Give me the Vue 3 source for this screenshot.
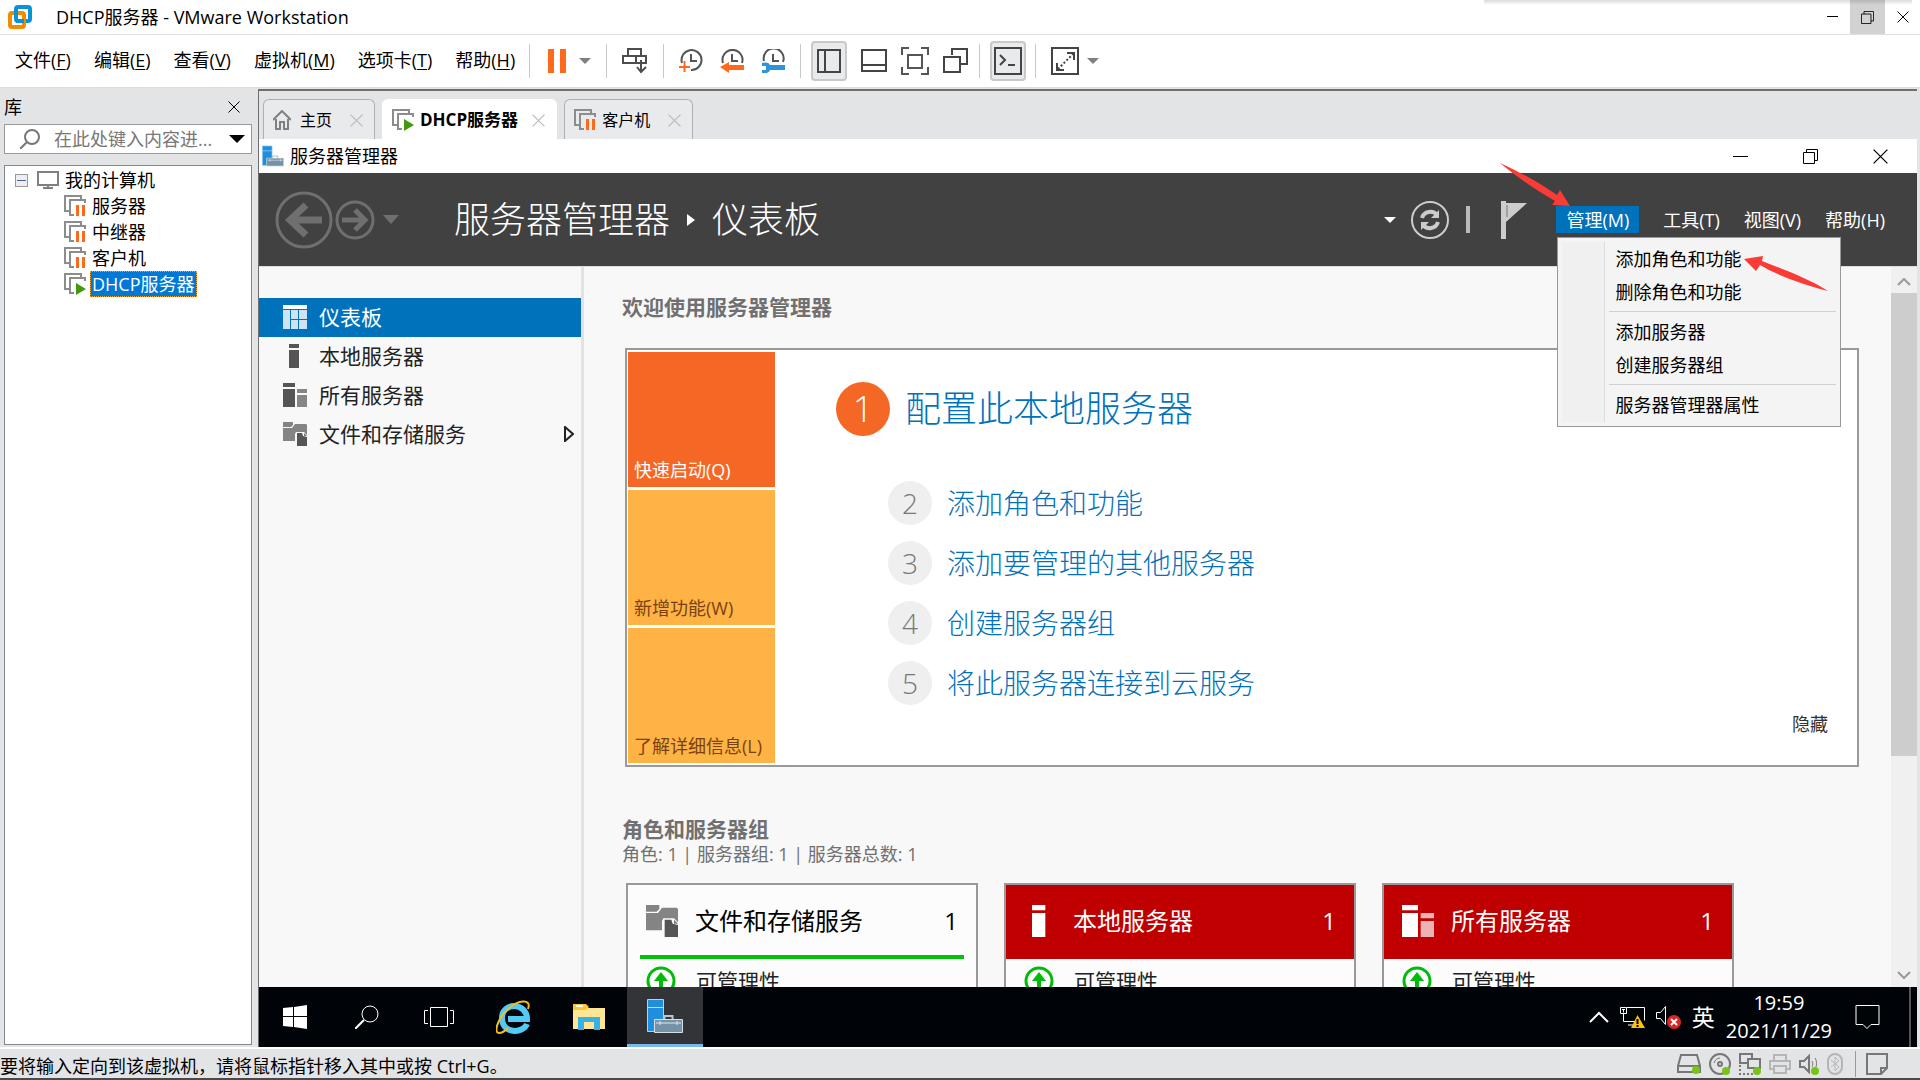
<template>
  <div class="workstation">
    <svg class="symbols" aria-hidden="true">
      <symbol id="vm-paused" viewBox="0 0 22 22">
        <path d="M5 16H1V1h16v4" fill="none" stroke="#8c8c8c" stroke-width="2" />
        <path d="M10 20H6V5h15v3" fill="none" stroke="#8c8c8c" stroke-width="2" />
        <path d="M12 10h3v11h-3zM18 10h3v11h-3z" fill="#ff6a1a" />
      </symbol>
      <symbol id="vm-running" viewBox="0 0 22 22">
        <path d="M5 16H1V1h16v4" fill="none" stroke="#8c8c8c" stroke-width="2" />
        <path d="M10 20H6V5h15v3" fill="none" stroke="#8c8c8c" stroke-width="2" />
        <path d="M12 10v12l10-6z" fill="#43980e" />
      </symbol>
      <symbol id="cross" viewBox="0 0 12 12">
        <path d="M0.5 0.5l11 11M11.5 0.5l-11 11" fill="none" stroke="currentColor" />
      </symbol>
      <symbol id="restore" viewBox="0 0 15 15">
        <path d="M3.5 3.5v-3h11v11h-3M0.5 3.5h11v11h-11z" fill="none" stroke="#000" />
      </symbol>
      <symbol id="toolbox" viewBox="0 0 36 34">
        <path d="M0.5 0.5h16v32h-16z" fill="#1f8fdd" stroke="#a9d6f5" />
        <path d="M0 8.5h17" stroke="#b9dff8" />
        <path d="M17.5 21v-4h8v4" fill="none" stroke="#b5c6d1" stroke-width="2" />
        <path d="M7.5 20.5h28v13h-28z" fill="#7593a6" stroke="#d5dfe5" />
        <path d="M9 24h25M13 22v4M30 22v4" stroke="#dfe7ec" />
      </symbol>
      <symbol id="local-server" viewBox="0 0 24 24">
        <path d="M6 0h10v4H6zM6 6h10v18H6z" fill="currentColor" />
      </symbol>
      <symbol id="all-servers" viewBox="0 0 24 24">
        <path d="M0 0h12v4H0zM0 6h12v18H0z" fill="currentColor" />
        <path d="M14 6h10v4H14zM14 12h10v12H14z" fill="currentColor" opacity="0.7" />
      </symbol>
      <symbol id="storage" viewBox="0 0 24 24">
        <path d="M0 5V0h10v3l-2 2z" fill="#848484" />
        <path d="M0 6h9l3-4h11l1 1v10l-3-3h-8l-1 2v7H0z" fill="#848484" />
        <path d="M14 11h5l1 3 4 1v9H14z" fill="#555" />
        <path d="M21 11l3 3h-3z" fill="#777" />
      </symbol>
      <symbol id="dashboard" viewBox="0 0 24 24">
        <path d="M0 0h24v4H0z" fill="#fff" />
        <path d="M0 5h7v19H0zM8 5h7v9H8zM16 5h8v9h-8zM8 15h7v9H8zM16 15h8v9h-8z" fill="#cce4f3" />
      </symbol>
    </svg>

    <header class="titlebar">
      <svg class="app-logo" viewBox="0 0 24 24">
        <rect x="8" y="2" width="14" height="14" rx="2" fill="none" stroke="#0a94d6" stroke-width="4" />
        <rect x="2" y="8" width="14" height="14" rx="2" fill="none" stroke="#f38b00" stroke-width="4" />
        <path d="M8 12V4M8 16h8" fill="none" stroke="#0a94d6" stroke-width="4" />
      </svg>
      <h1>DHCP服务器 - VMware Workstation</h1>
      <div class="window-buttons">
        <button type="button" aria-label="最小化"><svg width="11" height="12" viewBox="0 0 11 12"><path d="M0 5.5h11" stroke="#000" /></svg></button>
        <button type="button" class="hovered" aria-label="还原"><svg width="13" height="13"><use href="#restore" /></svg></button>
        <button type="button" aria-label="关闭"><svg width="12" height="12"><use href="#cross" /></svg></button>
      </div>
      <div class="edge-shadow"></div>
    </header>

    <div class="toolbar">
      <nav class="menus">
        <button v-for="menu in menus" :key="menu.key" type="button">{{ menu.label }}(<u>{{ menu.key }}</u>)</button>
      </nav>
      <div class="tool-group">
        <button type="button" class="tool pause" aria-label="挂起">
          <svg width="20" height="24" viewBox="0 0 20 24"><path d="M1 0h6v24H1zM13 0h6v24h-6z" fill="#ff6a1a" /></svg>
          <span class="caret"></span>
        </button>
      </div>
      <div class="tool-group">
        <button type="button" class="tool" aria-label="发送 Ctrl+Alt+Del">
          <svg width="26" height="26" viewBox="0 0 26 26" fill="none" stroke="#4d4d4d" stroke-width="2">
            <path d="M6 1h13v7H6zM1 8h13v7H1zM14 8h10v7H14zM19 12v12M15 19l4 5 5-5" />
          </svg>
        </button>
      </div>
      <div class="tool-group wide">
        <button type="button" class="tool" aria-label="拍摄快照">
          <svg width="24" height="24" viewBox="0 0 24 24" fill="none" stroke="#555" stroke-width="2">
            <path d="M3 14a10 10 0 1 1 9 7M12 5v7h6" />
            <path d="M0 18h11M5.5 12v11" stroke="#ff6a1a" />
          </svg>
        </button>
        <button type="button" class="tool" aria-label="恢复快照">
          <svg width="24" height="24" viewBox="0 0 24 24" fill="none" stroke="#555" stroke-width="2">
            <path d="M3 14a10 10 0 1 1 19 0M12 5v7h6" />
            <path d="M0 18l9-5v3h15v5H9v3z" fill="#ff6a1a" stroke="none" />
          </svg>
        </button>
        <button type="button" class="tool" aria-label="管理快照">
          <svg width="24" height="24" viewBox="0 0 24 24" fill="none" stroke="#555" stroke-width="2">
            <path d="M3 12a10 10 0 1 1 19 1M12 5v7h6" />
            <path d="M1 14c3-1 7-1 8 2h15v5H9c-1 3-5 4-8 3v-3h4v-4H1z" fill="#2c96dd" stroke="none" />
          </svg>
        </button>
      </div>
      <div class="tool-group views">
        <button type="button" class="tool pressed" aria-label="显示库">
          <svg width="24" height="24" viewBox="0 0 24 24" fill="none" stroke="#444" stroke-width="2"><path d="M1 1h22v22H1zM8 1v22" /></svg>
        </button>
        <button type="button" class="tool" aria-label="显示缩略图栏">
          <svg width="26" height="24" viewBox="0 0 26 24" fill="none" stroke="#444" stroke-width="2"><path d="M1 1h24v21H1zM1 16h24" /></svg>
        </button>
        <button type="button" class="tool" aria-label="全屏">
          <svg width="28" height="28" viewBox="0 0 28 28" fill="none" stroke="#555" stroke-width="2"><path d="M1 8V1h7M20 1h7v7M27 20v7h-7M8 27H1v-7M7 8h14v13H7z" /></svg>
        </button>
        <button type="button" class="tool" aria-label="Unity">
          <svg width="26" height="26" viewBox="0 0 26 26" fill="none" stroke="#444" stroke-width="2"><path d="M9 7V1h15v15h-6M1 9h16v15H1z" /></svg>
        </button>
      </div>
      <div class="tool-group console">
        <button type="button" class="tool pressed" aria-label="控制台视图">
          <svg width="28" height="28" viewBox="0 0 28 28" fill="none" stroke="#444" stroke-width="2"><path d="M1 1h26v26H1z" /><path d="M6 8l5 5-5 5M14 18h7" /></svg>
        </button>
      </div>
      <div class="tool-group stretch">
        <button type="button" class="tool" aria-label="自由拉伸">
          <svg width="28" height="28" viewBox="0 0 28 28" fill="none" stroke="#444" stroke-width="2"><path d="M1 1h26v26H1zM16 6h7v7M6 16v7h7" /><path d="M7 22L22 7" stroke-dasharray="2 2" /></svg>
          <span class="caret"></span>
        </button>
      </div>
    </div>

    <div class="workspace">
      <aside class="library">
        <div class="library-head">
          <h2>库</h2>
          <button type="button" aria-label="关闭库"><svg width="12" height="12"><use href="#cross" /></svg></button>
        </div>
        <label class="library-search">
          <svg width="20" height="20" viewBox="0 0 20 20" fill="none" stroke="#777" stroke-width="2"><circle cx="12" cy="8" r="7" /><path d="M7 13l-7 7" /></svg>
          <input v-model="searchQuery" type="text" placeholder="在此处键入内容进..." aria-label="搜索库" />
          <span class="caret black"></span>
        </label>
        <div class="tree">
          <div class="tree-root">
            <span class="toggle"></span>
            <svg width="22" height="18" viewBox="0 0 22 18" fill="none" stroke="#808080" stroke-width="2"><path d="M1 1h20v13H1zM11 14v3M6 17h10" /></svg>
            <span>我的计算机</span>
          </div>
          <ul>
            <li v-for="vm in machines" :key="vm.name">
              <svg width="22" height="22"><use :href="'#vm-' + vm.state" /></svg>
              <span class="vm-name" :class="{ selected: vm.selected }">{{ vm.name }}</span>
            </li>
          </ul>
        </div>
      </aside>

      <section class="console-pane">
        <div class="tabs">
          <div class="tab home">
            <svg width="18" height="20" viewBox="0 0 18 20" fill="none" stroke="#808080" stroke-width="2"><path d="M0 10l9-9 9 9M3 9v10h4v-7h4v7h4V9" /></svg>
            <button type="button">主页</button>
            <svg class="tab-close" width="13" height="13"><use href="#cross" /></svg>
          </div>
          <div class="tab active">
            <svg width="22" height="22"><use href="#vm-running" /></svg>
            <button type="button">DHCP服务器</button>
            <svg class="tab-close" width="13" height="13"><use href="#cross" /></svg>
          </div>
          <div class="tab">
            <svg width="22" height="22"><use href="#vm-paused" /></svg>
            <button type="button">客户机</button>
            <svg class="tab-close" width="13" height="13"><use href="#cross" /></svg>
          </div>
        </div>

        <div class="guest">
          <div class="guest-title">
            <svg width="22" height="22"><use href="#toolbox" /></svg>
            <span>服务器管理器</span>
            <div class="guest-buttons">
              <button type="button" aria-label="最小化"><svg width="15" height="15" viewBox="0 0 15 15"><path d="M0 7.5h15" stroke="#000" /></svg></button>
              <button type="button" aria-label="还原"><svg width="15" height="15"><use href="#restore" /></svg></button>
              <button type="button" aria-label="关闭"><svg width="15" height="15"><use href="#cross" /></svg></button>
            </div>
          </div>

          <div class="manager-head">
            <button type="button" class="round" aria-label="后退">
              <svg width="58" height="58" viewBox="0 0 58 58" fill="none" stroke="#6f6f6f"><circle cx="29" cy="29" r="27" stroke-width="3" /><path d="M47 29H16M31 14L15 29l16 15" stroke-width="7" /></svg>
            </button>
            <button type="button" class="round" aria-label="前进">
              <svg width="40" height="40" viewBox="0 0 40 40" fill="none" stroke="#6f6f6f"><circle cx="20" cy="20" r="18" stroke-width="3" /><path d="M7 20h23M20 10l10 10-10 10" stroke-width="5" /></svg>
            </button>
            <span class="caret dim"></span>
            <div class="crumbs">
              <span>服务器管理器</span>
              <span class="crumb-arrow"></span>
              <span>仪表板</span>
            </div>
            <div class="manager-tools">
              <span class="caret white"></span>
              <button type="button" class="round refresh" aria-label="刷新">
                <svg width="40" height="40" viewBox="0 0 40 40" fill="none" stroke="#ccc">
                  <circle cx="20" cy="20" r="18" stroke-width="2" />
                  <path d="M12 18c2-7 11-8 15-3M28 22c-2 7-11 8-15 3" stroke-width="4" />
                  <path d="M29 10v8h-8zM11 30v-8h8z" fill="#ccc" stroke="none" />
                </svg>
              </button>
              <span class="divider"></span>
              <button type="button" class="round flag" aria-label="通知">
                <svg width="26" height="38" viewBox="0 0 26 38" fill="#ccc"><path d="M0 0h5v38H0zM5 2h21L5 21z" /><path d="M6 4v12" stroke="#777" /></svg>
              </button>
              <nav class="manager-menus">
                <div class="manage">
                  <button type="button" class="open">管理(M)</button>
                  <div class="dropdown">
                    <div class="gutter"></div>
                    <div class="entries">
                      <template v-for="(group, i) in manageMenu" :key="i">
                        <hr v-if="i > 0" />
                        <button v-for="entry in group" :key="entry" type="button">{{ entry }}</button>
                      </template>
                    </div>
                    <svg class="pointer-add" width="84" height="36" viewBox="0 0 84 36"><path d="M0 3l19-3-1 5c20 8 46 17 66 30C62 29 34 20 16 9l-4 6z" fill="#fb3b35" /></svg>
                  </div>
                  <svg class="pointer-manage" width="72" height="46" viewBox="0 0 72 46"><path d="M0 1c20 9 40 20 57 32l3-5 10 16-18-1 3-4C36 28 18 16 0 1z" fill="#fb3b35" /></svg>
                </div>
                <button type="button">工具(T)</button>
                <button type="button">视图(V)</button>
                <button type="button">帮助(H)</button>
              </nav>
            </div>
          </div>

          <div class="manager-body">
            <nav class="sidebar">
              <button v-for="item in sidebar" :key="item.label" type="button" :class="{ current: item.current }">
                <svg width="24" height="24"><use :href="'#' + item.icon" /></svg>
                <span>{{ item.label }}</span>
                <svg v-if="item.expand" class="expand" width="10" height="16" viewBox="0 0 10 16"><path d="M1 1l8 7-8 7z" fill="none" stroke="#222" stroke-width="2" /></svg>
              </button>
            </nav>

            <main>
              <h3>欢迎使用服务器管理器</h3>
              <div class="welcome">
                <div class="shortcuts">
                  <button type="button" class="quick">快速启动(Q)</button>
                  <button type="button">新增功能(W)</button>
                  <button type="button">了解详细信息(L)</button>
                </div>
                <div class="steps">
                  <a href="#" class="step first"><span class="number">1</span>配置此本地服务器</a>
                  <a v-for="(step, i) in steps" :key="step" href="#" class="step"><span class="number">{{ i + 2 }}</span>{{ step }}</a>
                </div>
                <button type="button" class="hide">隐藏</button>
              </div>

              <h3 class="groups-title">角色和服务器组</h3>
              <p class="groups-summary">角色: 1 | 服务器组: 1 | 服务器总数: 1</p>
              <div class="cards">
                <article v-for="card in cards" :key="card.title" class="card" :class="{ alert: card.alert }">
                  <header>
                    <svg width="32" height="32"><use :href="'#' + card.icon" /></svg>
                    <h4>{{ card.title }}</h4>
                    <span>1</span>
                  </header>
                  <div class="status">
                    <svg width="30" height="30" viewBox="0 0 30 30" fill="none" stroke="#00bb0a"><circle cx="15" cy="15" r="13" stroke-width="3" /><path d="M15 24V9" stroke-width="4" /><path d="M8 15l7-9 7 9z" fill="#00bb0a" stroke="none" /></svg>
                    <span>可管理性</span>
                  </div>
                </article>
              </div>
            </main>

            <div class="scrollbar">
              <svg width="14" height="8" viewBox="0 0 14 8" fill="none" stroke="#999" stroke-width="2"><path d="M1 7l6-6 6 6" /></svg>
              <div class="track"><div class="thumb"></div></div>
              <svg width="14" height="8" viewBox="0 0 14 8" fill="none" stroke="#999" stroke-width="2"><path d="M1 1l6 6 6-6" /></svg>
            </div>
          </div>

          <footer class="taskbar">
            <button type="button" class="system" aria-label="开始">
              <svg width="24" height="24" viewBox="0 0 24 24"><path d="M0 3l10-1v9H0zM11 2l13-2v11H11zM0 12h10v10L0 21zM11 12h13v12l-13-2z" fill="#fff" /></svg>
            </button>
            <button type="button" class="system" aria-label="搜索">
              <svg width="24" height="24" viewBox="0 0 24 24" fill="none" stroke="#fff"><circle cx="15" cy="9" r="8" /><path d="M9 15l-9 9" stroke-width="2" /></svg>
            </button>
            <button type="button" class="system" aria-label="任务视图">
              <svg width="30" height="20" viewBox="0 0 30 20" fill="none" stroke="#fff"><path d="M6.5 0.5h17v19h-17zM4 3.5H0.5v13H4M26 3.5h3.5v13H26" /></svg>
            </button>
            <button type="button" aria-label="Internet Explorer">
              <svg width="34" height="34" viewBox="0 0 34 34" fill="none">
                <path d="M31 24C27 34 6 34 6 18S31 2 31 19H12" stroke="#53c9f5" stroke-width="6" />
                <path d="M32 9C36-2 22 0 12 9S-3 33 3 33c3 0 6-2 9-5" stroke="#f5bd1c" stroke-width="2" />
              </svg>
            </button>
            <button type="button" aria-label="文件资源管理器">
              <svg width="32" height="27" viewBox="0 0 32 27">
                <path d="M0 1h12l3 3h17v21H0z" fill="#ffe594" />
                <path d="M0 0h13l3 3-3 3H0z" fill="#fdc530" /><path d="M3 2h7" stroke="#fff" stroke-width="2" />
                <path d="M5 13h22v13h-6v-8H11v8H5z" fill="#38b1e6" />
              </svg>
            </button>
            <button type="button" class="running" aria-label="服务器管理器">
              <svg width="36" height="34"><use href="#toolbox" /></svg>
            </button>
            <div class="tray">
              <svg width="20" height="12" viewBox="0 0 20 12" fill="none" stroke="#fff" stroke-width="2"><path d="M1 11l9-9 9 9" /></svg>
              <svg width="25" height="22" viewBox="0 0 25 22" fill="none" stroke="#fff"><path d="M7 1.5h17.5v13M3.5 8v7.500H15M8 19h6M0.5 1.5h6v6h-6zM2 3.5h3M3.5 3.5v3" /><path d="M17.5 9L25 22H11z" fill="#ffc20e" stroke="none" /><path d="M17.5 13v5M17.5 19v2" stroke="#000" stroke-width="2" /></svg>
              <svg width="25" height="24" viewBox="0 0 25 24" fill="none" stroke="#fff"><path d="M0.5 7.5h4l5-6v18l-5-6h-4z" /><circle cx="18" cy="17" r="7" fill="#dc2626" stroke="none" /><path d="M15 14l6 6M21 14l-6 6" stroke-width="2" /></svg>
              <span class="ime">英</span>
              <time>19:59<br />2021/11/29</time>
              <svg class="notice" width="25" height="24" viewBox="0 0 25 24" fill="none" stroke="#fff"><path d="M1 0.5h23v19h-8l-4 4-4-4H1z" stroke-width="1" /></svg>
              <span class="desktop-edge"></span>
            </div>
          </footer>
        </div>
      </section>
    </div>

    <footer class="statusbar">
      <p>要将输入定向到该虚拟机，请将鼠标指针移入其中或按 Ctrl+G。</p>
      <div class="devices">
        <svg width="24" height="22" viewBox="0 0 24 22" fill="none" stroke="#777" stroke-width="2"><path d="M4 2h16l3 11v6H1v-6zM1 13h22" /><circle cx="19" cy="17" r="4" fill="#75c514" stroke="none" /></svg>
        <svg width="22" height="22" viewBox="0 0 22 22" fill="none" stroke="#777" stroke-width="2"><circle cx="11" cy="11" r="10" /><circle cx="11" cy="11" r="2" /><path d="M5 10c1-3 3-5 6-5" stroke-width="1" /><circle cx="17" cy="18" r="4" fill="#75c514" stroke="none" /></svg>
        <svg width="22" height="22" viewBox="0 0 22 22" fill="none" stroke="#777" stroke-width="2"><path d="M8 10H1V1h12v5M9 6h12v9H9z" /><path d="M1 12v9h14" stroke-dasharray="2 2" /><circle cx="18" cy="18" r="4" fill="#75c514" stroke="none" /></svg>
        <svg width="22" height="22" viewBox="0 0 22 22" fill="none" stroke="#b5b5b5" stroke-width="2"><path d="M5 8V2h12v6M5 16H1V8h20v8h-4M5 13h12v7H5z" /></svg>
        <svg width="20" height="22" viewBox="0 0 20 22" fill="none" stroke="#777" stroke-width="2"><path d="M1 8h4l5-5v16l-5-5H1z" /><path d="M13 8c1 2 1 4 0 6M16 5c2 3 2 8 0 11" stroke-width="1" /><circle cx="16" cy="18" r="4" fill="#75c514" stroke="none" /></svg>
        <svg width="16" height="22" viewBox="0 0 16 22" fill="none" stroke="#b5b5b5"><rect x="1" y="1" width="14" height="20" rx="7" stroke-width="2" /><path d="M4 7l8 7-4 4V4l4 4-8 6" /></svg>
        <span class="divider"></span>
        <svg width="22" height="22" viewBox="0 0 22 22" fill="none" stroke="#777" stroke-width="2"><path d="M1 1h20v14l-6 6H1zM21 15h-6v6" /></svg>
      </div>
    </footer>
  </div>
</template>

<script setup>
import { ref } from 'vue'

const searchQuery = ref('')

const menus = [
  { label: '文件', key: 'F' },
  { label: '编辑', key: 'E' },
  { label: '查看', key: 'V' },
  { label: '虚拟机', key: 'M' },
  { label: '选项卡', key: 'T' },
  { label: '帮助', key: 'H' }
]

const machines = [
  { name: '服务器', state: 'paused' },
  { name: '中继器', state: 'paused' },
  { name: '客户机', state: 'paused' },
  { name: 'DHCP服务器', state: 'running', selected: true }
]

const manageMenu = [
  ['添加角色和功能', '删除角色和功能'],
  ['添加服务器', '创建服务器组'],
  ['服务器管理器属性']
]

const sidebar = [
  { label: '仪表板', icon: 'dashboard', current: true },
  { label: '本地服务器', icon: 'local-server' },
  { label: '所有服务器', icon: 'all-servers' },
  { label: '文件和存储服务', icon: 'storage', expand: true }
]

const steps = ['添加角色和功能', '添加要管理的其他服务器', '创建服务器组', '将此服务器连接到云服务']

const cards = [
  { title: '文件和存储服务', icon: 'storage' },
  { title: '本地服务器', icon: 'local-server', alert: true },
  { title: '所有服务器', icon: 'all-servers', alert: true }
]
</script>

<style>
body {
  margin: 0;
}
</style>

<style scoped>
.workstation {
  display: flex;
  flex-direction: column;
  height: 100vh;
  box-sizing: border-box;
  overflow: hidden;
  border-bottom: 2px solid #4a4a4a;
  background: #e3e4e6;
  color: #000;
  font-family: "Open Sans", "Noto Sans CJK SC", sans-serif;
  font-size: 18px;
  line-height: 26px;
}

.symbols {
  position: absolute;
  width: 0;
  height: 0;
}

svg {
  display: block;
  flex: none;
}

h1, h2, h3, h4, p, ul {
  margin: 0;
  padding: 0;
  font-size: inherit;
  font-weight: 400;
}

button {
  display: flex;
  align-items: center;
  padding: 0;
  border: 0;
  background: none;
  color: inherit;
  font: inherit;
  white-space: nowrap;
}

.caret {
  flex: none;
  border: 6px solid transparent;
  border-top-color: #808080;
  border-bottom: 0;
}

/* Host window */
.titlebar {
  position: relative;
  display: flex;
  align-items: center;
  flex: none;
  height: 34px;
  padding-left: 8px;
  border-bottom: 1px solid #e0e0e0;
  background: #fff;
}

.app-logo {
  width: 24px;
  height: 24px;
  margin-right: 24px;
}

.titlebar h1 {
  flex: 1;
}

.window-buttons {
  display: flex;
  align-self: stretch;
}

.window-buttons button {
  width: 35px;
  justify-content: center;
}

.window-buttons .hovered {
  background: #d2d2d2;
}

.edge-shadow {
  position: absolute;
  top: 0;
  right: 8px;
  width: 428px;
  height: 5px;
  background: linear-gradient(rgba(0, 0, 0, 0.14), rgba(0, 0, 0, 0));
}

.toolbar {
  display: flex;
  align-items: center;
  flex: none;
  height: 52px;
  padding-left: 15px;
  border-bottom: 1px solid #dcdcdc;
  background: #fff;
}

.menus {
  display: flex;
  gap: 23px;
  margin-right: 14px;
  padding-bottom: 2px;
}

.menus u {
  text-underline-offset: 2px;
}

.tool-group {
  display: flex;
  align-items: center;
  height: 34px;
  padding: 0 15px;
  border-left: 1px solid #c8c8c8;
}

.tool-group.wide {
  gap: 17px;
}

.tool-group.views {
  gap: 14px;
  padding: 0 10px;
}

.tool-group.console {
  padding: 0 9px 0 10px;
}

.tool {
  gap: 8px;
}

.pause {
  gap: 12px;
  padding-left: 2px;
}

.tool.pressed {
  justify-content: center;
  width: 36px;
  height: 40px;
  box-sizing: border-box;
  border: 2px solid #c9c9c9;
  border-radius: 4px;
  background: #e9eaec;
}

/* Library */
.workspace {
  display: flex;
  flex: 1;
  min-height: 0;
}

.library {
  display: flex;
  flex-direction: column;
  flex: none;
  width: 248px;
  padding: 4px 6px 2px 4px;
}

.library-head {
  display: flex;
  align-items: center;
  justify-content: space-between;
  height: 30px;
  padding: 0 12px 2px 0;
}

.library-search {
  display: flex;
  align-items: center;
  height: 28px;
  padding: 0 6px 0 15px;
  border: 1px solid #999;
  background: #fff;
}

.library-search input {
  flex: 1;
  min-width: 0;
  height: 26px;
  margin: 0 0 0 14px;
  padding: 0;
  border: 0;
  outline: 0;
  font: inherit;
}

.library-search input::placeholder {
  color: #777;
  opacity: 1;
}

.caret.black {
  border-width: 8px 8px 0;
  border-top-color: #000;
}

.tree {
  flex: 1;
  margin-top: 11px;
  padding: 1px 0 0 10px;
  border: 1px solid #828790;
  background: #fff;
}

.tree-root {
  display: flex;
  align-items: center;
  height: 26px;
}

.tree-root svg {
  margin: 0 6px 0 9px;
}

.toggle {
  width: 11px;
  height: 11px;
  border: 1px solid #999;
  background: linear-gradient(#4a62a8, #4a62a8) center / 9px 1px no-repeat #eee;
}

.tree ul {
  list-style: none;
  padding-left: 49px;
}

.tree li {
  display: flex;
  align-items: center;
  gap: 4px;
  height: 26px;
}

.vm-name {
  padding: 0 2px;
}

.vm-name.selected {
  height: 24px;
  padding: 0 1px;
  border: 1px dotted #f0a030;
  background: #0078d7;
  color: #fff;
  line-height: 24px;
}

/* Console pane */
.console-pane {
  display: flex;
  flex-direction: column;
  flex: 1;
  min-width: 0;
  margin: 1px 3px 0 0;
  border-top: 2px solid #6e6e6e;
  border-left: 1px solid #6e6e6e;
}

.tabs {
  display: flex;
  flex: none;
  gap: 7px;
  padding: 8px 4px 0;
}

.tab {
  display: flex;
  align-items: center;
  height: 38px;
  padding: 1px 11px 0 9px;
  border: 1px solid #b0b0b0;
  border-bottom: 0;
  border-radius: 6px 6px 0 0;
  background: #e9eaec;
  font-size: 16px;
}

.tab button {
  margin: 0 18px 0 6px;
}

.tab.home button {
  margin-left: 9px;
}

.tab-close {
  color: #b8b8b8;
}

.tab.active {
  border-color: #fff;
  background: #fff;
  font-size: 17px;
}

.tab.active button {
  margin-right: 14px;
  font-weight: 700;
}

.guest {
  display: flex;
  flex-direction: column;
  flex: 1;
  min-height: 0;
  background: #f8f8f8;
}

.guest-title {
  display: flex;
  align-items: center;
  flex: none;
  height: 34px;
  padding-left: 3px;
  background: #fff;
}

.guest-title > span {
  flex: 1;
  margin-left: 6px;
}

.guest-buttons {
  display: flex;
  gap: 55px;
  padding-right: 29px;
}

.manager-head {
  display: flex;
  align-items: center;
  flex: none;
  height: 93px;
  padding-left: 16px;
  border-bottom: 1px solid #dcdcdc;
  background: #414141;
  color: #fff;
}

.caret.dim {
  margin-left: 8px;
  border-width: 9px 8px 0;
  border-top-color: #6f6f6f;
}

.round + .round {
  margin-left: 2px;
}

.crumbs {
  display: flex;
  align-items: center;
  flex: 1;
  margin-left: 55px;
  font-size: 36px;
  font-weight: 300;
  line-height: 48px;
}

.crumb-arrow {
  margin: 0 17px;
  border: 6px solid transparent;
  border-left: 8px solid #fff;
  border-right: 0;
}

.manager-tools {
  display: flex;
  align-items: center;
  padding-right: 32px;
}

.caret.white {
  border-top-color: #fff;
}

.refresh {
  margin: 0 16px 0 14px;
}

.manager-tools .divider {
  width: 4px;
  height: 27px;
  background: #bbb;
}

.flag {
  margin: 0 29px 0 31px;
}

.manager-menus {
  display: flex;
  align-items: center;
  gap: 24px;
}

.manage {
  position: relative;
}

.manage .open {
  height: 27px;
  padding: 0 10px;
  background: #0072bc;
}

.dropdown {
  position: absolute;
  z-index: 2;
  top: 31px;
  left: 1px;
  display: flex;
  box-sizing: border-box;
  width: 284px;
  padding: 4px;
  border: 1px solid #999;
  background: #f4f4f4;
  color: #000;
}

.gutter {
  width: 42px;
  border-right: 1px solid #dcdcdc;
  background: #f0f0f0;
}

.entries {
  flex: 1;
  padding: 0 0 1px 4px;
}

.entries button {
  height: 33px;
  padding-left: 6px;
}

.entries hr {
  height: 1px;
  margin: 3px 0;
  border: 0;
  background: #d0d0d0;
}

.pointer-add {
  position: absolute;
  top: 18px;
  left: 186px;
}

.pointer-manage {
  position: absolute;
  z-index: 3;
  top: -44px;
  left: -56px;
}

.manager-body {
  display: flex;
  flex: 1;
  min-height: 0;
}

.sidebar {
  flex: none;
  width: 322px;
  padding-top: 31px;
  border-right: 3px solid #e2e2e2;
  color: #222;
  font-size: 21px;
}

.sidebar button {
  width: 100%;
  height: 39px;
  padding: 0 7px 2px 24px;
}

.sidebar button > svg:first-child {
  color: #555;
}

.sidebar button span {
  flex: 1;
  margin-left: 12px;
  text-align: left;
}

.sidebar .current {
  background: #0072bc;
  color: #fff;
}

main {
  flex: 1;
  min-width: 0;
  overflow: hidden;
  padding: 25px 32px 0 38px;
}

main h3 {
  color: #707070;
  font-size: 21px;
  font-weight: 700;
  line-height: 30px;
}

.welcome {
  display: flex;
  margin: 26px 0 0 3px;
  padding: 2px 1px;
  border: 2px solid #999;
  background: #fff;
}

.shortcuts {
  display: flex;
  flex-direction: column;
  flex: none;
  gap: 3px;
  width: 147px;
}

.shortcuts button {
  align-items: flex-end;
  height: 135px;
  padding: 0 0 4px 6px;
  background: #ffb345;
  color: #7a4212;
}

.shortcuts .quick {
  background: #f56725;
  color: #fff;
}

.steps {
  flex: 1;
  padding: 30px 0 0 61px;
}

.step {
  display: flex;
  align-items: center;
  gap: 15px;
  width: max-content;
  margin: 0 0 16px 52px;
  color: #0072bc;
  font-size: 28px;
  font-weight: 300;
  line-height: 44px;
  text-decoration: none;
}

.number {
  width: 44px;
  height: 44px;
  border-radius: 50%;
  background: #efefef;
  color: #777;
  text-align: center;
}

.step.first {
  margin: 0 0 45px;
  font-size: 36px;
  line-height: 54px;
}

.first .number {
  width: 54px;
  height: 54px;
  background: #f56725;
  color: #fff;
}

.hide {
  align-self: flex-end;
  margin: 0 28px 26px 0;
  color: #333;
}

.groups-title {
  margin-top: 47px;
}

.groups-summary {
  color: #707070;
  line-height: 20px;
}

.cards {
  display: flex;
  gap: 26px;
  margin: 19px 0 0 4px;
}

.card {
  flex: none;
  width: 348px;
  height: 200px;
  border: 2px solid #999;
  background: #fcfcfc;
}

.card header {
  display: flex;
  align-items: center;
  height: 68px;
  margin: 0 12px;
  padding: 2px 6px 0;
  border-bottom: 4px solid #00c20a;
  font-size: 24px;
}

.card h4 {
  flex: 1;
  margin-left: 17px;
}

.card.alert header {
  margin: 0;
  padding: 2px 18px 0;
  border-color: #c00000;
  background: #c00000;
  color: #fff;
}

.status {
  display: flex;
  align-items: center;
  gap: 20px;
  padding: 7px 18px;
  color: #222;
  font-size: 21px;
}

.scrollbar {
  display: flex;
  flex-direction: column;
  align-items: center;
  flex: none;
  width: 26px;
  padding: 11px 0 8px;
  box-sizing: border-box;
  background: #f0f0f0;
}

.track {
  flex: 1;
  width: 100%;
  margin: 7px 0;
}

.thumb {
  height: 69%;
  background: #cdcdcd;
}

.taskbar {
  display: flex;
  flex: none;
  height: 60px;
  background: #000408;
  color: #fff;
}

.taskbar > button {
  justify-content: center;
  width: 76px;
}

.taskbar .system {
  width: 72px;
}

.taskbar .running {
  box-sizing: border-box;
  border-bottom: 3px solid #76b9ed;
  background: #333438;
}

.tray {
  display: flex;
  align-items: center;
  margin-left: auto;
  padding-right: 6px;
  gap: 11px;
}

.ime {
  font-size: 23px;
}

.tray time {
  font-size: 20px;
  line-height: 28px;
  text-align: center;
}

.notice {
  margin: 0 18px 0 12px;
}

.desktop-edge {
  width: 2px;
  height: 60px;
  background: #555;
}

/* Status bar */
.statusbar {
  display: flex;
  align-items: center;
  justify-content: space-between;
  flex: none;
  height: 29px;
  padding: 0 32px 0 0;
  border-top: 2px solid #fff;
}

.statusbar p {
  padding-top: 4px;
  white-space: nowrap;
}

.devices {
  display: flex;
  align-items: center;
  gap: 8px;
}

.devices .divider {
  width: 1px;
  height: 26px;
  margin: 0 2px 0 4px;
  background: #999;
}
</style>
